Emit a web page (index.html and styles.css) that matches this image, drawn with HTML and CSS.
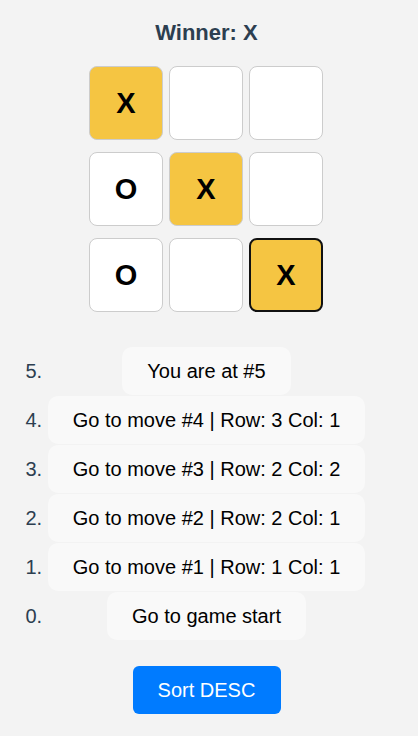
FILE: index.html
```html
<!DOCTYPE html>
<html>
<head>
<meta charset="utf-8">
<link rel="stylesheet" href="styles.css">
</head>
<body>
<div class="app">
  <h1 class="status">Winner: X</h1>
  <div class="board">
    <div class="row">
      <button class="square win">X</button>
      <button class="square"></button>
      <button class="square"></button>
    </div>
    <div class="row">
      <button class="square">O</button>
      <button class="square win">X</button>
      <button class="square"></button>
    </div>
    <div class="row">
      <button class="square">O</button>
      <button class="square"></button>
      <button class="square win last">X</button>
    </div>
  </div>
  <ol class="moves" reversed start="5">
    <li value="5"><span class="move current">You are at #5</span></li>
    <li value="4"><button class="move">Go to move #4 | Row: 3 Col: 1</button></li>
    <li value="3"><button class="move">Go to move #3 | Row: 2 Col: 2</button></li>
    <li value="2"><button class="move">Go to move #2 | Row: 2 Col: 1</button></li>
    <li value="1"><button class="move">Go to move #1 | Row: 1 Col: 1</button></li>
    <li value="0"><button class="move">Go to game start</button></li>
  </ol>
  <button class="sort">Sort DESC</button>
</div>
</body>
</html>
```
FILE: styles.css
```css
html, body {
  margin: 0;
  padding: 0;
  background: #f3f3f3;
}
body {
  font-family: "Liberation Sans", Arial, sans-serif;
  color: #2c3e50;
}
.app {
  width: 412px;
  display: flex;
  flex-direction: column;
  align-items: center;
  padding-top: 18px;
}
.status {
  margin: 0 0 0 1px;
  font-size: 22px;
  line-height: 30px;
  font-weight: bold;
  color: #2c3e50;
}
.board {
  margin-top: 18px;
  display: flex;
  flex-direction: column;
  gap: 12px;
}
.row {
  display: flex;
  gap: 6px;
}
.square {
  width: 74px;
  height: 74px;
  box-sizing: border-box;
  border: 1px solid #cccccc;
  border-radius: 8px;
  background: #ffffff;
  font-family: "Liberation Sans", Arial, sans-serif;
  font-size: 29px;
  font-weight: bold;
  color: #000000;
  padding: 0;
  display: flex;
  align-items: center;
  justify-content: center;
}
.square.win {
  background: #f5c542;
}
.square.last {
  border: 2px solid #111111;
}
.moves {
  margin: 35px 0 0 1px;
  padding: 0;
  font-size: 20px;
  line-height: 48px;
  color: #2c3e50;
}
.moves li {
  height: 49px;
  text-align: center;
}
.move {
  display: inline-block;
  box-sizing: border-box;
  height: 48px;
  line-height: 48px;
  padding: 0 25px;
  border: none;
  border-radius: 10px;
  background: #f9f9f9;
  font-family: "Liberation Sans", Arial, sans-serif;
  font-size: 20px;
  color: #000000;
  vertical-align: baseline;
}
.sort {
  margin: 25px 0 0 1px;
  width: 148px;
  height: 48px;
  border: none;
  border-radius: 6px;
  background: #007bff;
  color: #ffffff;
  font-family: "Liberation Sans", Arial, sans-serif;
  font-size: 20px;
  padding: 0;
}
```
